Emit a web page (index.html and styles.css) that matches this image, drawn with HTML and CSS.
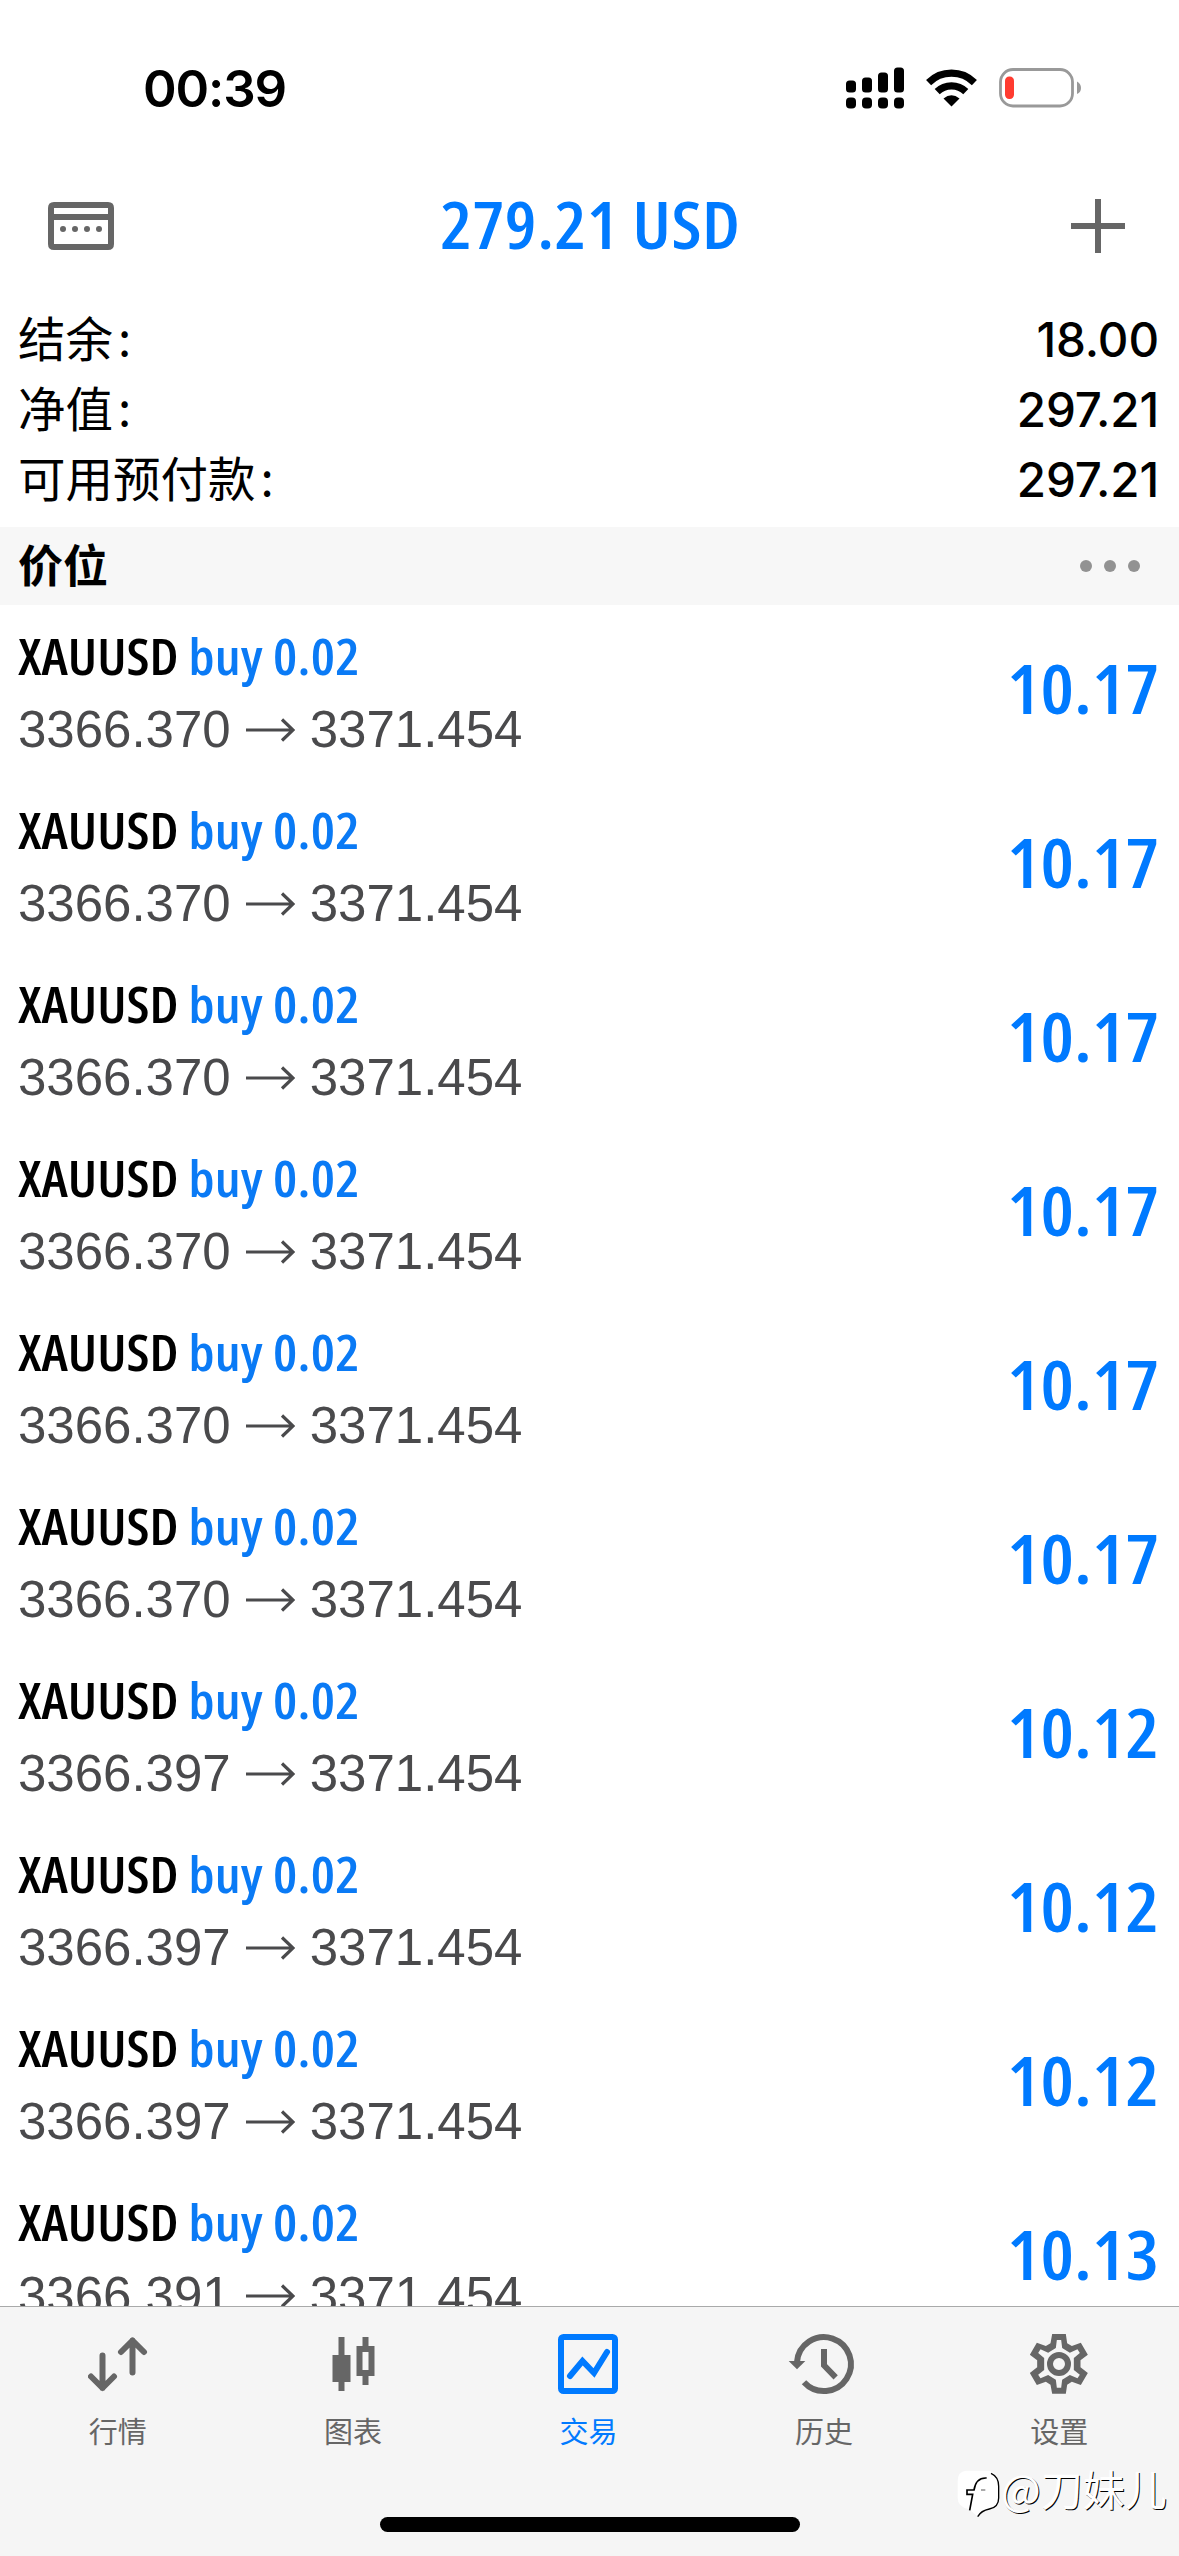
FILE: index.html
```
<!DOCTYPE html>
<html lang="zh-CN">
<head>
<meta charset="utf-8">
<title>交易</title>
<link rel="stylesheet" href="styles.css">
</head>
<body>
<div class="screen">
  <header class="status">
    <span class="clock">00:39</span>
    <div class="indicators">
      <svg width="58" height="42" viewBox="0 0 58 42">
        <rect x="0" y="13.500" width="10" height="12" rx="3.500"/><rect x="16" y="10.500" width="10" height="15" rx="3.500"/><rect x="32" y="5.500" width="10" height="20" rx="3.500"/><rect x="48" y="0.500" width="10" height="25" rx="3.500"/>
        <rect x="0" y="30.500" width="10" height="11" rx="4"/><rect x="16" y="30.500" width="10" height="11" rx="4"/><rect x="32" y="30.500" width="10" height="11" rx="4"/><rect x="48" y="30.500" width="10" height="11" rx="4"/>
      </svg>
      <svg class="wifi" width="51" height="38" viewBox="0 0 51 38" fill="none" stroke="#000" stroke-width="7.200">
        <path d="M2.600 13.600A32.500 32.500 0 0 1 48.400 13.600"/>
        <path d="M11.200 22.700A20.500 20.500 0 0 1 39.800 22.700"/>
        <path d="M25.500 37.500L17.500 29.500Q25.500 22.800 33.500 29.500Z" fill="#000" stroke="none"/>
      </svg>
      <svg class="battery" width="83" height="40" viewBox="0 0 83 40">
        <rect x="1.500" y="1.500" width="72" height="36.500" rx="12.500" fill="none" stroke="#999" stroke-width="2.800"/>
        <rect x="6" y="8.500" width="9" height="22.500" rx="4.200" fill="#ff3b30"/>
        <path d="M78 13.500Q82 15.500 82 20T78 26Z" fill="#999"/>
      </svg>
    </div>
  </header>

  <div class="titlebar">
    <svg width="66" height="48" viewBox="0 0 66 48" fill="#666">
      <path fill-rule="evenodd" d="M6 0H60Q66 0 66 6V42Q66 48 60 48H6Q0 48 0 42V6Q0 0 6 0ZM6 6V12H60V6ZM6 18V42H60V18Z"/>
      <circle cx="15" cy="27" r="3"/><circle cx="27" cy="27" r="3"/><circle cx="39" cy="27" r="3"/><circle cx="51" cy="27" r="3"/>
    </svg>
    <h1>279.21 USD</h1>
    <svg class="plus" width="54" height="54" viewBox="0 0 54 54" stroke="#666" stroke-width="6"><path d="M27 0V54M0 27H54"/></svg>
  </div>

  <dl class="summary">
    <div><dt>结余<i>:</i></dt><dd>18.00</dd></div>
    <div><dt>净值<i>:</i></dt><dd>297.21</dd></div>
    <div><dt>可用预付款<i>:</i></dt><dd>297.21</dd></div>
  </dl>

  <div class="section">
    <h2>价位</h2>
    <div class="more"><b></b><b></b><b></b></div>
  </div>

  <main class="positions" id="positions"></main>

  <nav class="tabs">
    <a><svg width="60" height="60" viewBox="0 0 60 60" fill="none" stroke="#666" stroke-width="6" stroke-linecap="round" stroke-linejoin="round"><path d="M14.500 21.500V54M3 42.500L14.500 54L26 42.500M44.500 38.500V6.500M33 18L44.500 6.500L56 18"/></svg><span>行情</span></a>
    <a><svg width="60" height="60" viewBox="0 0 60 60" fill="#666"><path d="M15.500 3H21.500V21H27.500V48H21.500V57H15.500V48H9.500V21H15.500Z"/><path fill-rule="evenodd" d="M39.500 3H45.500V12H51.500V42H45.500V51H39.500V42H33.500V12H39.500ZM39.500 18V36H45.500V18Z"/></svg><span>图表</span></a>
    <a class="on"><svg width="60" height="60" viewBox="0 0 60 60" fill="none" stroke="#007aff" stroke-width="6"><rect x="3" y="3" width="54" height="54" rx="2.500"/><path d="M12 42L24.500 27L36 39L49 18" stroke-linecap="round" stroke-linejoin="miter"/></svg><span>交易</span></a>
    <a><svg width="66" height="60" viewBox="63 42 198 180" fill="none" stroke="#666" stroke-width="18" overflow="visible"><path d="M81 126A81 81 0 1 1 102 187M162 87V136L197 172"/><path d="M56 123H106L81 148Z" fill="#666" stroke="none"/></svg><span>历史</span></a>
    <a><svg width="60" height="60" viewBox="57.500 42 180 180" fill="#666"><path fill-rule="evenodd" d="M127 42H168L172 70L186 78L213 68L234 104L212 121V142L234 159L213 195L186 185L172 194L168 221H127L122 194L108 185L81 195L60 159L82 142V121L60 104L81 68L108 78L122 70ZM141 60L138 84L115 98L92 88L85 99L103 114V150L85 164L92 175L115 165L138 179L141 203H154L157 179L180 165L203 175L210 164L192 150V114L210 99L203 88L180 98L157 84L154 60Z"/><circle cx="147.500" cy="132" r="27" fill="none" stroke="#666" stroke-width="18"/></svg><span>设置</span></a>
  </nav>
  <div class="home"></div>

  <div class="watermark">
    <svg width="44" height="48" viewBox="53 46 132 144" fill="none" stroke="#000" stroke-width="5">
      <path d="M80 48H150Q178 56 178 90V130Q178 160 150 163Q125 168 115 186L90 164Q55 158 55 130V80Q55 50 80 48Z" fill="#fff" stroke="none"/>
      <path d="M155 56Q178 66 178 95V130Q178 158 150 163Q125 168 115 186" stroke-width="4"/>
      <path d="M142 70Q110 68 104 106H83V119H100L91 167"/><path d="M125 106H138" stroke-width="2"/>
    </svg>
    <span>@刀妹儿</span>
  </div>
</div>
<script src="positions.js"></script>
</body>
</html>
```
FILE: styles.css
```
* { box-sizing: border-box; margin: 0; padding: 0; }
body { background: #fff; color: #000; }
svg { display: block; flex: none; }

.screen {
  position: relative;
  width: 1179px;
  height: 2556px;
  overflow: hidden;
  display: flex;
  flex-direction: column;
  font-family: Inter, "Noto Sans CJK SC", sans-serif;
}

.status {
  flex: none;
  height: 176px;
  display: flex;
  justify-content: space-between;
  align-items: center;
  padding: 0 97px 0 143px;
}
.clock { font-size: 51px; font-weight: 600; letter-spacing: -1.1px; }
.indicators { display: flex; align-items: center; padding-bottom: 1px; }
.wifi { margin-left: 22px; }
.battery { margin-left: 22px; }

.titlebar {
  flex: none;
  height: 100px;
  display: flex;
  justify-content: space-between;
  align-items: center;
  padding: 0 54px 0 48px;
}
.titlebar h1 {
  font: 600 65.5px/100px "Open Sans", sans-serif;
  font-stretch: 75%;
  letter-spacing: 0.5px;
  transform: scaleX(1.083);
  color: #007aff;
  padding: 0 4px 4px 0;
}

.summary { flex: none; padding: 29px 20px 12px 18px; }
.summary div { display: flex; justify-content: space-between; height: 70px; line-height: 70px; }
.summary dt { font-family: "Noto Sans CJK SC", sans-serif; font-size: 47.5px; line-height: 64px; }
.summary i { font-style: normal; margin-left: 5px; vertical-align: 1px; line-height: 1; }
.summary dd { font-size: 47.500px; font-weight: 500; letter-spacing: -0.1px; line-height: 70px; }

.section {
  flex: none;
  height: 78px;
  display: flex;
  justify-content: space-between;
  align-items: center;
  padding: 0 39px 0 18px;
  background: #f7f7f7;
}
.section h2 { font: 700 45px/72px "Noto Sans CJK SC", sans-serif; padding-bottom: 5px; }
.more { display: flex; gap: 12px; }
.more b { width: 12px; height: 12px; border-radius: 50%; background: #929292; }

.positions { flex: 1; min-height: 0; overflow: hidden; }
.row {
  height: 174px;
  display: flex;
  justify-content: space-between;
  padding: 17px 20px 13px 18px;
}
.deal {
  font: 600 50.5px/68px "Open Sans", sans-serif;
  font-stretch: 75%;
  height: 72px;
  transform: scaleX(1.075);
  transform-origin: left;
}
.deal em { font-style: normal; color: #0a7af5; letter-spacing: 0.2px; }
.quote {
  display: flex;
  align-items: center;
  height: 72px;
  font: 51px/72px "Liberation Sans", sans-serif;
  color: #4a4a4c;
}
.quote svg { margin: 0 15px 0 14px; }
.profit {
  font: 600 69px/131px "Open Sans", sans-serif;
  font-stretch: 75%;
  transform: scaleX(1.085);
  transform-origin: right;
  color: #007aff;
}

.tabs {
  flex: none;
  height: 250px;
  display: grid;
  grid-template-columns: repeat(5, 1fr);
  align-items: start;
  padding: 27px 2px 0 0;
  background: #f5f5f5;
  border-top: 1px solid #a9aaaa;
}
.tabs a {
  display: flex;
  flex-direction: column;
  align-items: center;
  gap: 14px;
  color: #666;
  font: 29px/44px "Noto Sans CJK SC", sans-serif;
}
.tabs .on { color: #007aff; }

.home {
  position: absolute;
  left: 380px;
  bottom: 24px;
  width: 420px;
  height: 15px;
  border-radius: 8px;
  background: #000;
}
.watermark {
  position: absolute;
  left: 957px;
  top: 2470px;
  display: flex;
  font: 42px/36px "Noto Sans CJK SC", sans-serif;
  color: #fff;
  text-shadow: 1px 1px 0 #000;
}
```
FILE: positions.js
```
const open = ["3366.370", "3366.370", "3366.370", "3366.370", "3366.370", "3366.370", "3366.397", "3366.397", "3366.397", "3366.391"];
const profit = ["10.17", "10.17", "10.17", "10.17", "10.17", "10.17", "10.12", "10.12", "10.12", "10.13"];
const arrow = '<svg width="50" height="24" viewBox="0 0 50 24" fill="none" stroke="#4a4a4c" stroke-width="3.2"><path d="M1 12H48M37 1.500L48 12L37 22.500"/></svg>';
document.getElementById("positions").innerHTML = open.map((price, i) => `
  <div class="row">
    <div>
      <div class="deal">XAUUSD <em>buy 0.02</em></div>
      <div class="quote">${price}${arrow}3371.454</div>
    </div>
    <div class="profit">${profit[i]}</div>
  </div>`).join("");
```
